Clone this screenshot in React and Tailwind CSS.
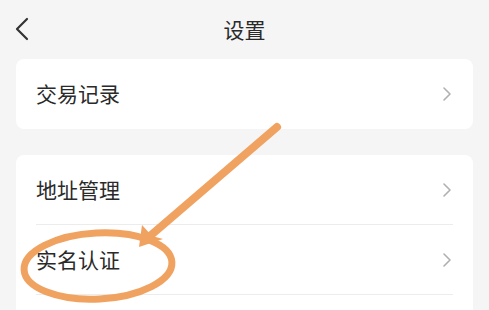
import React from 'react';

const font = { fontFamily: '"Noto Sans CJK SC", "Noto Sans", sans-serif' };

const Chevron = () => (
  <svg width="10" height="16" viewBox="0 0 10 16" fill="none" className="shrink-0">
    <path d="M2 2l6 6-6 6" stroke="#b0b0b0" strokeWidth="1.6" strokeLinecap="round" strokeLinejoin="round" />
  </svg>
);

const Row = ({ label, divider }) => (
  <div className="px-5">
    <div className={`h-[70px] flex items-center justify-between pr-[1px] ${divider ? 'border-b border-[#ececec]' : ''}`}>
      <span className="text-[21px] text-[#2a2a2a]">{label}</span>
      <Chevron />
    </div>
  </div>
);

const App = () => (
  <div className="relative w-[489px] h-[310px] overflow-hidden bg-[#f5f5f5]" style={font}>
    <div className="h-[59px] flex items-center relative">
      <svg className="absolute left-[14px] top-[17px]" width="16" height="24" viewBox="0 0 16 24" fill="none">
        <path d="M13 2L3 12l10 10" stroke="#333" strokeWidth="2.2" strokeLinecap="round" strokeLinejoin="round" />
      </svg>
      <div className="flex-1 text-center text-[21px] text-[#2a2a2a]">设置</div>
    </div>

    <div className="mx-4 bg-white rounded-lg">
      <Row label="交易记录" />
    </div>

    <div className="mx-4 mt-[26px] bg-white rounded-lg">
      <Row label="地址管理" divider />
      <Row label="实名认证" divider />
      <div className="h-[70px]" />
    </div>

    <svg className="absolute inset-0 pointer-events-none" width="489" height="310" viewBox="0 0 489 310">
      <line x1="277" y1="127" x2="150" y2="236" stroke="#f0a261" strokeWidth="8" strokeLinecap="round" />
      <path d="M139 247 L142 225 L152 236 L163 239 Z" fill="#f0a261" />
      <ellipse cx="98" cy="266" rx="74" ry="33" fill="none" stroke="#f0a261" strokeWidth="7" transform="rotate(-3 98 266)" />
    </svg>
  </div>
);

export default App;
